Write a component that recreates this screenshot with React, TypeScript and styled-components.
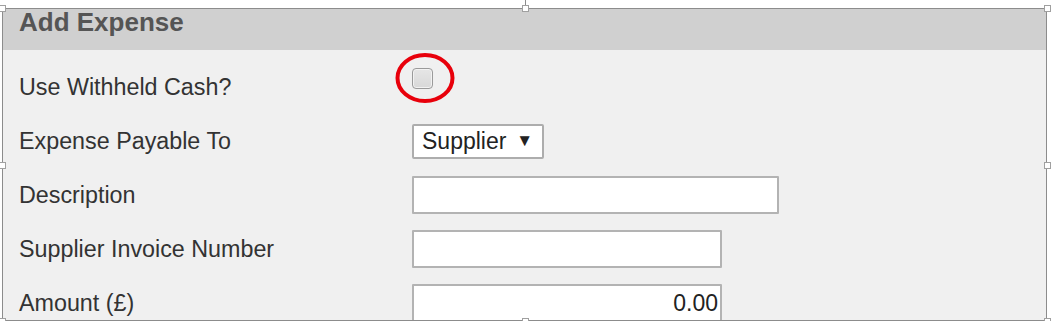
import styled, { createGlobalStyle } from "styled-components"

const GlobalStyle = createGlobalStyle`
    body {
        margin: 0;
        background: #fff;
        font-family: "Liberation Sans", Arial, sans-serif;
    }
`

const handles = [
    { x: "0%", y: "0%" },
    { x: "50%", y: "0%" },
    { x: "100%", y: "0%" },
    { x: "0%", y: "50%" },
    { x: "100%", y: "50%" },
    { x: "0%", y: "100%" },
    { x: "50%", y: "100%" },
    { x: "100%", y: "100%" },
]

export default function App() {
    return (
        <>
            <GlobalStyle />
            <Selection>
                <RotateLine />
                {handles.map((h, i) => (
                    <Handle key={i} style={{ left: h.x, top: h.y }} />
                ))}
                <Frame>
                    <Header>Add Expense</Header>
                    <Body>
                        <Row>
                            <Label>Use Withheld Cash?</Label>
                            <CheckWrap>
                                <Checkbox />
                                <Circle width="64" height="54" viewBox="0 0 64 54">
                                    <ellipse cx="32" cy="27" rx="27.5" ry="23" fill="none" stroke="#e8000b" strokeWidth="4" />
                                </Circle>
                            </CheckWrap>
                        </Row>
                        <Row>
                            <Label>Expense Payable To</Label>
                            <Select>
                                <span>Supplier</span>
                                <Arrow>▼</Arrow>
                            </Select>
                        </Row>
                        <Row>
                            <Label>Description</Label>
                            <Input $width={367} />
                        </Row>
                        <Row>
                            <Label>Supplier Invoice Number</Label>
                            <Input $width={310} />
                        </Row>
                        <Row>
                            <Label>Amount (£)</Label>
                            <Input $width={310} $align="right" defaultValue="0.00" />
                        </Row>
                    </Body>
                </Frame>
            </Selection>
        </>
    )
}

const Selection = styled.div`
    position: relative;
    margin: 8px 0 0 2px;
    width: 1045px;
    height: 313px;
`
const Frame = styled.div`
    box-sizing: border-box;
    width: 100%;
    height: 100%;
    border: 1px solid #8c8c8c;
    background: #f0f0f0;
    overflow: hidden;
`
const Handle = styled.div`
    position: absolute;
    z-index: 2;
    box-sizing: border-box;
    width: 7px;
    height: 7px;
    margin: -3px 0 0 -3px;
    background: #fff;
    border: 1px solid #a0a0a0;
`
const RotateLine = styled.div`
    position: absolute;
    left: 50%;
    top: -8px;
    width: 1px;
    height: 8px;
    background: #8c8c8c;
`
const Header = styled.div`
    height: 41px;
    background: #d0d0d0;
    padding-left: 16px;
    font-size: 26px;
    line-height: 26px;
    font-weight: 700;
    color: #555;
`
const Body = styled.div`
    display: flex;
    flex-direction: column;
    padding: 10px 0 0 16px;
`
const Row = styled.div`
    display: flex;
    align-items: center;
    height: 54px;
    flex-shrink: 0;
`
const Label = styled.div`
    width: 393px;
    font-size: 23.3px;
    color: #333;
`
const CheckWrap = styled.div`
    position: relative;
    align-self: flex-start;
    margin-top: 8px;
`
const Checkbox = styled.div`
    box-sizing: border-box;
    width: 21px;
    height: 21px;
    border: 1px solid #9a9a9a;
    border-radius: 4px;
    background: linear-gradient(#e6e6e6, #d8d8d8);
    box-shadow: inset 0 0 0 1px #f2f2f2;
`
const Circle = styled.svg`
    position: absolute;
    left: -19px;
    top: -17px;
`
const Select = styled.div`
    box-sizing: border-box;
    display: flex;
    align-items: center;
    justify-content: space-between;
    width: 132px;
    height: 35px;
    padding: 0 9px 0 8px;
    background: #fff;
    border: 2px solid #adadad;
    border-radius: 2px;
    font-size: 23px;
    color: #222;
`
const Arrow = styled.span`
    font-size: 17px;
`
const Input = styled.input<{ $width: number; $align?: string }>`
    box-sizing: border-box;
    width: ${p => p.$width}px;
    height: 38px;
    padding: 0 2px;
    background: #fff;
    border: 2px solid #b3b3b3;
    border-radius: 1px;
    outline: none;
    font-family: "Liberation Sans", Arial, sans-serif;
    font-size: 23px;
    color: #222;
    text-align: ${p => p.$align || "left"};
`
